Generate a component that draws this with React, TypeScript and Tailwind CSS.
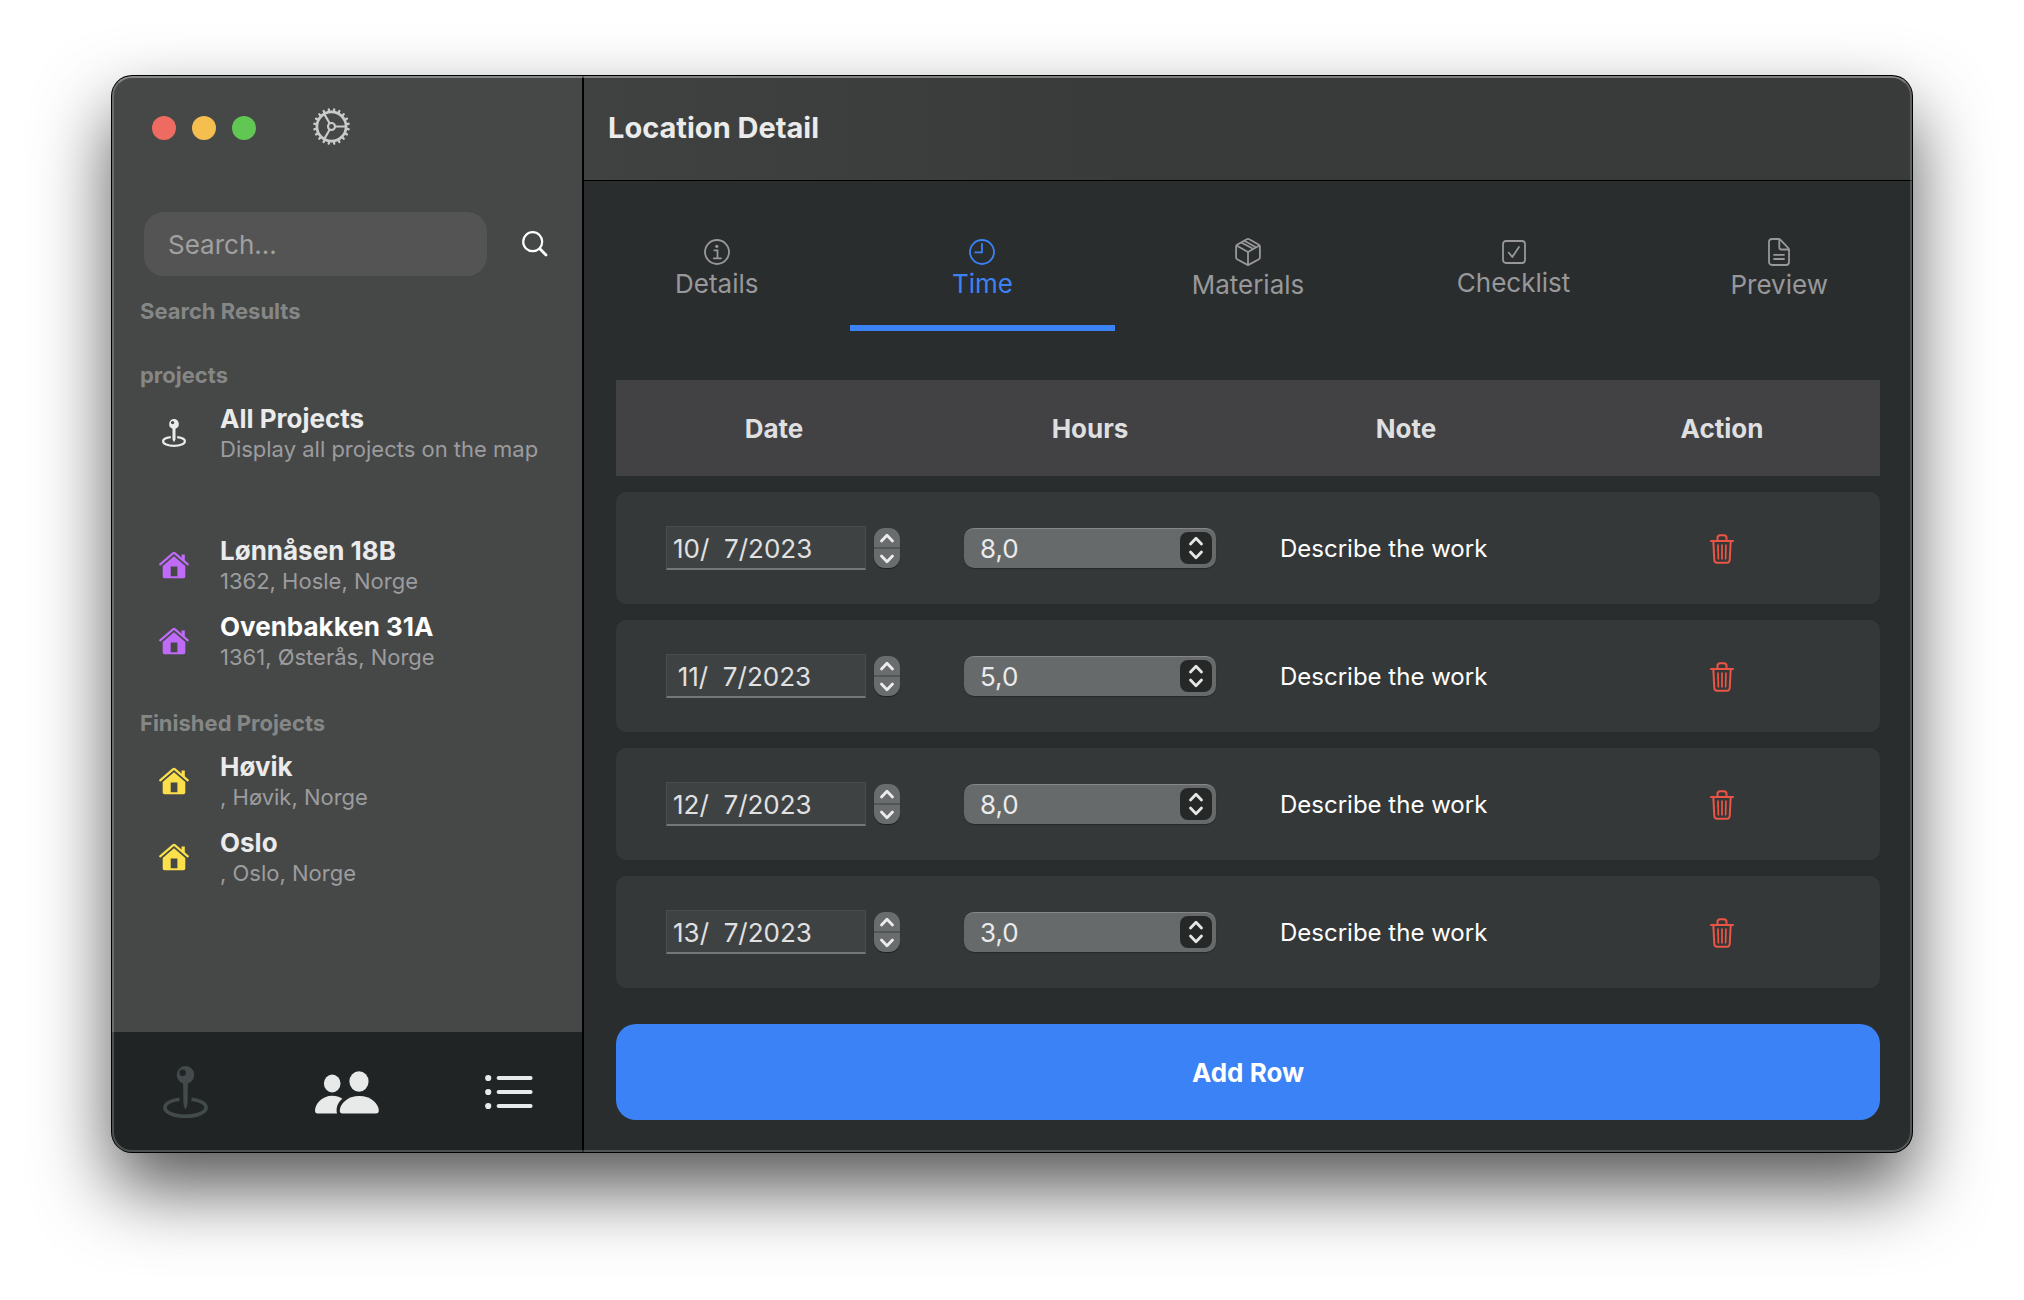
import React from "react";

function GearIcon() {
  const teeth = Array.from({ length: 20 }, (_, i) => i * 18 + 9);
  return (
    <svg className="size-[37px]" viewBox="0 0 38 38" fill="none" stroke="currentColor" aria-hidden="true">
      <circle cx="19" cy="19" r="15" strokeWidth="2.8" />
      <circle cx="19" cy="19" r="3.6" strokeWidth="2.2" />
      <path d="M22.6 19H34M17.2 15.9L11.5 6M17.2 22.1L11.5 32" strokeWidth="2.2" />
      {teeth.map((a) => (
        <path key={a} d="M19 3.6V1.2" strokeWidth="2.4" strokeLinecap="round" transform={`rotate(${a} 19 19)`} />
      ))}
    </svg>
  );
}

function SearchIcon() {
  return (
    <svg className="size-[26px]" viewBox="0 0 26 26" fill="none" stroke="currentColor" strokeLinecap="round" aria-hidden="true">
      <circle cx="10.7" cy="10.7" r="9.5" strokeWidth="2.2" />
      <path d="M17.8 17.8L24 24" strokeWidth="2.8" />
    </svg>
  );
}

function PinIcon({ className }: { className: string }) {
  return (
    <svg className={className} viewBox="0 0 45 52" aria-hidden="true">
      <path
        fill="currentColor"
        fillRule="evenodd"
        d="M22.5 0a9 9 0 0 1 2.4 17.6L24.6 36c-.1 3-.9 6-2.1 7.4-1.2-1.4-2-4.4-2.1-7.4L20.1 17.6A9 9 0 0 1 22.5 0ZM19.7 3.5a3.2 3.2 0 1 0 0 6.4 3.2 3.2 0 0 0 0-6.4Z"
      />
      <path
        d="M16.5 33.2C8 34.3 1.9 37.5 1.9 41.5c0 5 9 8.7 20.6 8.7s20.6-3.7 20.6-8.7c0-4-6.1-7.2-14.6-8.3"
        fill="none"
        stroke="currentColor"
        strokeWidth="3.6"
      />
    </svg>
  );
}

function SmallPinIcon() {
  return (
    <svg className="h-7 w-6 text-[#ebebeb]" viewBox="0 0 24 28" aria-hidden="true">
      <path
        fill="currentColor"
        fillRule="evenodd"
        d="M12 0a5 5 0 0 1 1.5 9.7V20.5L12 23.3 10.5 20.5V9.7A5 5 0 0 1 12 0ZM10.6 1.9a1.7 1.7 0 1 0 0 3.4 1.7 1.7 0 0 0 0-3.4Z"
      />
      <path
        d="M8.8 18.1C4.2 18.6 1.1 20.2 1.1 22.3c0 2.6 4.8 4.5 10.9 4.5s10.9-1.9 10.9-4.5c0-2.1-3.1-3.7-7.7-4.2"
        fill="none"
        stroke="currentColor"
        strokeWidth="2.2"
      />
    </svg>
  );
}

function HouseIcon({ className }: { className: string }) {
  return (
    <svg className={className} viewBox="0 0 30 28" aria-hidden="true">
      <path
        d="M1.2 13.3L14 2.3a1.6 1.6 0 0 1 2 0L28.8 13.3"
        fill="none"
        stroke="currentColor"
        strokeWidth="2.2"
        strokeLinecap="round"
      />
      <path d="M22.6 3.5h3.2v7.2L22.6 8Z" fill="currentColor" />
      <path
        fill="currentColor"
        fillRule="evenodd"
        d="M15 5.2L26.3 14.9V25.5a1.8 1.8 0 0 1-1.8 1.8h-19A1.8 1.8 0 0 1 3.7 25.5V14.9ZM11.7 15.5v9.7h6.7v-9.7Z"
      />
    </svg>
  );
}

function PeopleIcon() {
  return (
    <svg className="h-[43px] w-16" viewBox="0 0 64 43" fill="currentColor" aria-hidden="true">
      <ellipse cx="44" cy="10.5" rx="9.6" ry="10.3" />
      <path d="M27.5 42.5c-2 0-2.7-1.2-2.7-3 0-6.5 8-14.5 19.5-14.5S63.8 33 63.8 39.5c0 1.8-.8 3-2.8 3Z" />
      <ellipse cx="17.2" cy="12.5" rx="8.3" ry="9" />
      <path d="M22 42.5H2.7C.8 42.5 0 41.4 0 39.8 0 33 7 24.8 17.2 24.8c4 0 7.5 1.1 10.2 2.9-4.2 3.4-6.8 8.5-5.4 14.8Z" />
    </svg>
  );
}

function ListIcon() {
  return (
    <svg className="h-[36px] w-12" viewBox="0 0 48 36" aria-hidden="true">
      {[4, 18, 32].map((y) => (
        <g key={y}>
          <circle cx="3.2" cy={y} r="3.1" fill="currentColor" />
          <path d={`M13.6 ${y}H45.6`} stroke="currentColor" strokeWidth="4" strokeLinecap="round" />
        </g>
      ))}
    </svg>
  );
}

function InfoIcon() {
  return (
    <svg className="size-[26px]" viewBox="0 0 26 26" fill="none" stroke="currentColor" strokeWidth="1.8" aria-hidden="true">
      <circle cx="13" cy="13" r="12" />
      <circle cx="12.8" cy="7.3" r="1.6" fill="currentColor" stroke="none" />
      <path d="M10.3 11.3h3.2v7.8M9.8 19.3h7.2" strokeLinecap="round" />
    </svg>
  );
}

function ClockIcon() {
  return (
    <svg className="size-[26px]" viewBox="0 0 26 26" fill="none" stroke="currentColor" strokeWidth="1.8" aria-hidden="true">
      <circle cx="13" cy="13" r="12" />
      <path d="M13 4.8V13.4H6.3" strokeLinecap="round" strokeLinejoin="round" />
    </svg>
  );
}

function BoxIcon() {
  return (
    <svg className="h-[28px] w-[26px]" viewBox="0 0 26 28" fill="none" stroke="currentColor" strokeWidth="1.8" strokeLinejoin="round" aria-hidden="true">
      <path d="M11.8 1.3a2.4 2.4 0 0 1 2.4 0L23.9 6.8a2 2 0 0 1 1 1.7V19.5a2 2 0 0 1-1 1.7L13 27.1 2.1 21.2a2 2 0 0 1-1-1.7V8.5a2 2 0 0 1 1-1.7Z" />
      <path d="M1.5 7.5L13 14 24.5 7.5M13 14V27M6.3 4.5L18.5 11M9.3 2.8L21 9.3" />
    </svg>
  );
}

function CheckIcon() {
  return (
    <svg className="size-6" viewBox="0 0 24 24" fill="none" stroke="currentColor" strokeWidth="1.8" aria-hidden="true">
      <rect x="1" y="1" width="22" height="22" rx="3" />
      <path d="M6.8 12.7L10.3 17 17 7" strokeLinecap="round" strokeLinejoin="round" />
    </svg>
  );
}

function DocIcon() {
  return (
    <svg className="h-[28px] w-[22px]" viewBox="0 0 22 28" fill="none" stroke="currentColor" strokeWidth="1.8" strokeLinecap="round" strokeLinejoin="round" aria-hidden="true">
      <path d="M4 1h6.5c.8 0 1.4.3 2 .9l7.6 8c.6.6.9 1.2.9 2V24a3 3 0 0 1-3 3H4a3 3 0 0 1-3-3V4a3 3 0 0 1 3-3Z" />
      <path d="M11.3 1.5v8c0 1.3.7 2 2 2h7.5M6 16.8h10M6 21h10" />
    </svg>
  );
}

function TrashIcon() {
  return (
    <svg className="h-[30px] w-6" viewBox="0 0 24 30" fill="none" stroke="currentColor" strokeWidth="2" strokeLinecap="round" strokeLinejoin="round" aria-hidden="true">
      <path d="M1 7h22M7.5 6.500V3.800c0-1.600 1-2.600 2.600-2.600h3.800c1.600 0 2.600 1 2.600 2.600v2.700" />
      <path d="M3.300 7l1 19c.1 1.700 1.200 2.700 2.900 2.700h9.600c1.700 0 2.800-1 2.900-2.700l1-19" />
      <path d="M8 11l.4 13.800M12 11v13.800M16 11l-.4 13.800" strokeWidth="1.700" />
    </svg>
  );
}

function Chevron({ up = false }: { up?: boolean }) {
  return (
    <svg className="h-[10px] w-4" viewBox="0 0 16 10" fill="none" stroke="currentColor" strokeWidth="2.8" strokeLinecap="round" strokeLinejoin="round" aria-hidden="true">
      <path d={up ? "M2.5 8L8 2.2 13.5 8" : "M2.5 2L8 7.8 13.5 2"} />
    </svg>
  );
}

const tabs = [
  { label: "Details", icon: <InfoIcon /> },
  { label: "Time", icon: <ClockIcon /> },
  { label: "Materials", icon: <BoxIcon /> },
  { label: "Checklist", icon: <CheckIcon /> },
  { label: "Preview", icon: <DocIcon /> },
];

// A thin space pads the narrow "11" so that the slashes line up.
const rows = [
  { date: "10/  7/2023", hours: "8,0" },
  { date: "\u200911/  7/2023", hours: "5,0" },
  { date: "12/  7/2023", hours: "8,0" },
  { date: "13/  7/2023", hours: "3,0" },
];

function SectionTitle({ children }: { children: React.ReactNode }) {
  return <h2 className="pl-7 text-[22px] leading-7 font-bold text-[#858786]">{children}</h2>;
}

function Project({ icon, title, detail, bright = false }: { icon: React.ReactNode; title: string; detail: string; bright?: boolean }) {
  return (
    <li>
      <a href="#" className="flex items-center py-2 pl-11">
        <span className="flex w-[36px] justify-center">{icon}</span>
        <span className="pl-7 whitespace-nowrap">
          <span className={bright ? "block text-[26px] leading-8 font-bold text-white" : "block text-[26px] leading-8 font-bold text-[#ebebeb]"}>{title}</span>
          <span className="block text-[22px] leading-7 text-[#9c9c9f]">{detail}</span>
        </span>
      </a>
    </li>
  );
}

function Sidebar() {
  return (
    <aside className="flex w-[472px] shrink-0 flex-col border-r-2 border-black bg-[#464847]">
      <div className="flex h-[136px] items-start pt-8 pl-10">
        <div className="flex h-10 items-center gap-4">
          <button aria-label="Close" className="size-6 rounded-full bg-[#ed6b60]" />
          <button aria-label="Minimize" className="size-6 rounded-full bg-[#f5bf4f]" />
          <button aria-label="Zoom" className="size-6 rounded-full bg-[#62c655]" />
        </div>
        <button aria-label="Settings" className="ml-[57px] text-[#c9cac9]">
          <GearIcon />
        </button>
      </div>
      <form className="flex items-center pl-8" onSubmit={(e) => e.preventDefault()}>
        <input
          aria-label="Search"
          placeholder="Search..."
          className="h-16 w-[343px] rounded-[20px] bg-[#545454] px-6 text-[26px] text-white outline-none placeholder:text-[#a0a0a0]"
        />
        <button aria-label="Run search" className="ml-[35px] text-white">
          <SearchIcon />
        </button>
      </form>
      <div className="mt-[21px] flex-1">
        <SectionTitle>Search Results</SectionTitle>
        <div className="mt-9">
          <SectionTitle>projects</SectionTitle>
        </div>
        <ul className="mt-[6px]">
          <Project icon={<SmallPinIcon />} title="All Projects" detail="Display all projects on the map" />
        </ul>
        <ul className="mt-14">
          <Project icon={<HouseIcon className="h-7 w-[30px] text-[#bf6bf7]" />} title="Lønnåsen 18B" detail="1362, Hosle, Norge" />
          <Project icon={<HouseIcon className="h-7 w-[30px] text-[#bf6bf7]" />} title="Ovenbakken 31A" detail="1361, Østerås, Norge" bright />
        </ul>
        <div className="mt-[30px]">
          <SectionTitle>Finished Projects</SectionTitle>
        </div>
        <ul className="mt-[6px]">
          <Project icon={<HouseIcon className="h-7 w-[30px] text-[#fbe04b]" />} title="Høvik" detail=", Høvik, Norge" />
          <Project icon={<HouseIcon className="h-7 w-[30px] text-[#fbe04b]" />} title="Oslo" detail=", Oslo, Norge" />
        </ul>
      </div>
      <nav className="flex h-[120px] items-center justify-between bg-[#212425] pr-[49px] pl-[51px] text-[#e8e9e9]">
        <button aria-label="Map" className="text-[#434a4b]">
          <PinIcon className="h-[52px] w-[45px]" />
        </button>
        <button aria-label="People">
          <PeopleIcon />
        </button>
        <button aria-label="List">
          <ListIcon />
        </button>
      </nav>
    </aside>
  );
}

function TimeTable() {
  return (
    <table className="w-full table-fixed border-separate border-spacing-x-0 border-spacing-y-4">
      <thead>
        <tr className="h-24 bg-[#424244] text-[26px] text-[#dfdfe0]">
          {["Date", "Hours", "Note", "Action"].map((h) => (
            <th key={h} className="p-0 font-bold">
              {h}
            </th>
          ))}
        </tr>
      </thead>
      <tbody>
        {rows.map((row) => (
          <tr key={row.date} className="h-28">
            <td className="rounded-l-[10px] bg-[#353839] p-0 pr-8 pl-[50px]">
              <div className="flex items-center gap-2">
                <input
                  aria-label="Date"
                  defaultValue={row.date}
                  className="h-11 w-full min-w-0 border border-b-2 border-[#4a4d4e] border-b-[#747778] bg-[#3f4243] px-[6px] pt-0.5 text-[26px] text-[#e1e1e1] outline-none"
                />
                <div className="flex h-10 w-[26px] shrink-0 flex-col divide-y-2 divide-[#535556] overflow-hidden rounded-[11px] bg-[#6a6d6e] text-[#ececec] shadow-[0_1px_1px_rgba(0,0,0,0.4)]">
                  <button aria-label="Next day" className="flex flex-1 items-center justify-center">
                    <Chevron up />
                  </button>
                  <button aria-label="Previous day" className="flex flex-1 items-center justify-center">
                    <Chevron />
                  </button>
                </div>
              </div>
            </td>
            <td className="bg-[#353839] p-0 px-8">
              <div className="relative">
                <select
                  aria-label="Hours"
                  defaultValue={row.hours}
                  className="block h-10 w-full appearance-none rounded-[10px] border-t border-[#858788] bg-[#676a6b] pr-10 pb-1 pl-4 text-[26px] text-[#ebebeb] shadow-[0_1px_1px_rgba(0,0,0,0.3)] outline-none"
                >
                  <option>3,0</option>
                  <option>5,0</option>
                  <option>8,0</option>
                </select>
                <span className="pointer-events-none absolute top-1 right-1 flex h-8 w-8 flex-col items-center justify-center gap-1 rounded-lg bg-[#262828] text-[#e6e6e6]">
                  <Chevron up />
                  <Chevron />
                </span>
              </div>
            </td>
            <td className="bg-[#353839] p-0 px-8 pt-0.5">
              <input aria-label="Note" defaultValue="Describe the work" className="w-full bg-transparent text-[24px] leading-8 text-white outline-none" />
            </td>
            <td className="rounded-r-[10px] bg-[#353839] p-0 pt-0.5">
              <button aria-label="Delete row" className="mx-auto block text-[#ec5545]">
                <TrashIcon />
              </button>
            </td>
          </tr>
        ))}
      </tbody>
    </table>
  );
}

export default function App() {
  return (
    <div className="flex min-h-screen bg-white px-28 pt-[76px] pb-[148px] font-['Inter',sans-serif]">
      <div className="relative flex flex-1 overflow-hidden rounded-[20px] bg-[#2a2d2e] shadow-[0_0_0_1px_#000,0_36px_74px_rgba(0,0,0,0.67)] after:pointer-events-none after:absolute after:inset-0 after:rounded-[20px] after:border-2 after:border-t-white/35 after:border-r-white/20 after:border-b-white/20 after:border-l-white/20">
        <Sidebar />
        <main className="flex min-w-0 flex-1 flex-col">
          <header className="flex h-[105px] items-center border-b border-black bg-linear-to-r from-[#404241] to-[#393b3a] to-40% pl-6">
            <h1 className="text-[29px] font-bold text-[#ebebeb]">Location Detail</h1>
          </header>
          <div role="tablist" className="mt-[33px] flex">
            {tabs.map((tab) => (
              <button
                key={tab.label}
                role="tab"
                aria-selected={tab.label === "Time"}
                className="flex h-[117px] flex-1 flex-col items-center justify-center gap-[3px] border-b-[6px] border-transparent text-[26px] leading-8 text-[#98989b] aria-selected:border-[#3b82f6] aria-selected:text-[#3b82f6]"
              >
                {tab.icon}
                {tab.label}
              </button>
            ))}
          </div>
          <div className="flex flex-1 flex-col px-8 pt-[33px] pb-8">
            <TimeTable />
            <button className="mt-5 h-24 rounded-[20px] bg-[#3b82f6] text-[26px] font-bold text-white">Add Row</button>
          </div>
        </main>
      </div>
    </div>
  );
}
